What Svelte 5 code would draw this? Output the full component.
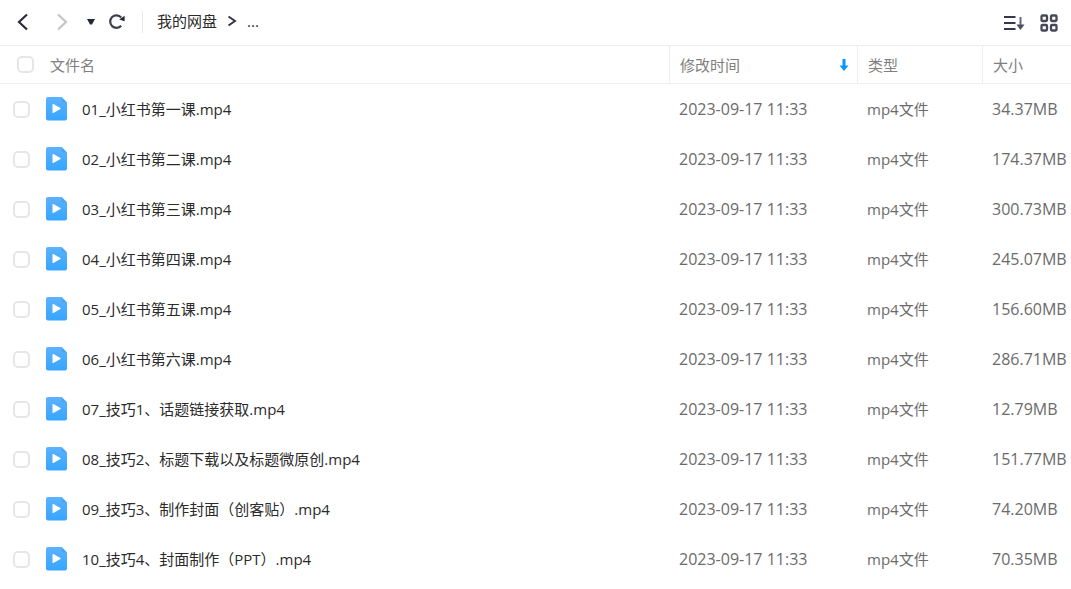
<script>
  const files = [
    ['01_小红书第一课.mp4', '34.37MB'],
    ['02_小红书第二课.mp4', '174.37MB'],
    ['03_小红书第三课.mp4', '300.73MB'],
    ['04_小红书第四课.mp4', '245.07MB'],
    ['05_小红书第五课.mp4', '156.60MB'],
    ['06_小红书第六课.mp4', '286.71MB'],
    ['07_技巧1、话题链接获取.mp4', '12.79MB'],
    ['08_技巧2、标题下载以及标题微原创.mp4', '151.77MB'],
    ['09_技巧3、制作封面（创客贴）.mp4', '74.20MB'],
    ['10_技巧4、封面制作（PPT）.mp4', '70.35MB']
  ].map(([name, size]) => ({ name, size, time: '2023-09-17 11:33', type: 'mp4文件' }));

  let selected = $state(files.map(() => false));
  let all = $derived(selected.every(Boolean));

  function toggleAll(event) {
    const value = event.currentTarget.checked;
    selected = files.map(() => value);
  }
</script>

<div class="drive">
  <header class="toolbar">
    <nav class="history">
      <button aria-label="后退">
        <svg width="16" height="20" viewBox="0 0 16 20"><path d="M13 2.500 5 10l8 7.500" fill="none" stroke="#2b2d3c" stroke-width="2.200" /></svg>
      </button>
      <button class="forward" aria-label="前进" disabled>
        <svg width="16" height="20" viewBox="0 0 16 20"><path d="M4 2.500 12 10l-8 7.500" fill="none" stroke="#c4c4c8" stroke-width="2.200" /></svg>
      </button>
      <button class="recent" aria-label="历史记录">
        <svg width="10" height="8" viewBox="0 0 10 8"><path d="M1 1h8L6 6.500H4z" fill="#25283a" /></svg>
      </button>
      <button class="refresh" aria-label="刷新">
        <svg width="18" height="18" viewBox="0 0 18 18">
          <path d="M13.200 12.800A6.300 6.300 0 1 1 13.200 4.400" fill="none" stroke="#3b3e4b" stroke-width="2.200" />
          <path d="M16.600 2.800v5.400l-5.400-1.600z" fill="#25283a" />
        </svg>
      </button>
    </nav>
    <nav class="crumbs" aria-label="路径">
      <a href="#root">我的网盘</a>
      <svg width="10" height="12" viewBox="0 0 10 12"><path d="m1.500 1.500 6.500 4.500-6.500 4.500" fill="none" stroke="#35363f" stroke-width="2" /></svg>
      <a href="#more">...</a>
    </nav>
    <div class="views">
      <button aria-label="排序">
        <svg width="22" height="18" viewBox="0 0 22 18">
          <path d="M1 3h11.500M1 9h11.500M1 15h11.500" stroke="#35384a" stroke-width="2" />
          <path d="M17.500 3v11" stroke="#666a78" stroke-width="2" />
          <path d="M13.500 10.500h8l-4 5.500z" fill="#4b4f60" />
        </svg>
      </button>
      <button aria-label="网格视图">
        <svg width="20" height="20" viewBox="0 0 20 20" fill="none" stroke="#454859" stroke-width="2.300">
          <rect x="2.500" y="2.500" width="5.500" height="5.500" rx="1" /><rect x="12" y="2.500" width="5.500" height="5.500" rx="1" />
          <rect x="2.500" y="12" width="5.500" height="5.500" rx="1" /><rect x="12" y="12" width="5.500" height="5.500" rx="1" />
        </svg>
      </button>
    </div>
  </header>

  <table>
    <colgroup><col /><col class="c-time" /><col class="c-type" /><col class="c-size" /></colgroup>
    <thead>
      <tr>
        <th>
          <div class="head-name">
            <input type="checkbox" aria-label="全选" checked={all} onchange={toggleAll} />
            <span>文件名</span>
          </div>
        </th>
        <th>
          <div class="head-time">
            <span>修改时间</span>
            <svg width="10" height="14" viewBox="0 0 10 14"><path d="M3.500 1h3v6.500H9.500L5 13 .5 7.500h3z" fill="#0a95ff" /></svg>
          </div>
        </th>
        <th>类型</th>
        <th>大小</th>
      </tr>
    </thead>
    <tbody>
      {#each files as file, i}
        <tr>
          <td>
            <label class="file">
              <input type="checkbox" bind:checked={selected[i]} />
              <svg width="22" height="26" viewBox="-1 0 22 26">
                <defs>
                  <linearGradient id="sheet{i}" x1="0" y1="0" x2="0" y2="1">
                    <stop offset="0" stop-color="#5cb2ff" /><stop offset="1" stop-color="#36a5ff" />
                  </linearGradient>
                </defs>
                <path d="M2 1h13.500l5.500 5.500v16a2 2 0 0 1-2 2H2a2 2 0 0 1-2-2V3a2 2 0 0 1 2-2z" fill="url(#sheet{i})" />
                <path d="M15.500 1l5.500 5.500h-3.500a2 2 0 0 1-2-2z" fill="#4da4f2" />
                <path d="M6.500 8.600v7.800q0 .9.900.500l7-3.900q.700-.500 0-1l-7-3.900q-.900-.400-.900.500z" fill="#fff" />
              </svg>
              <span>{file.name}</span>
            </label>
          </td>
          <td class="number">{file.time}</td>
          <td>{file.type}</td>
          <td class="number">{file.size}</td>
        </tr>
      {/each}
    </tbody>
  </table>
</div>

<style>
  :global(body) {
    background: #fff;
  }
  .drive {
    overflow: hidden;
    color: #6b6b6b;
    font: 15px/20px "Open Sans", "Noto Sans CJK SC", sans-serif;
  }
  .toolbar {
    display: flex;
    align-items: center;
    box-sizing: border-box;
    height: 46px;
    padding: 0 12px 2px 14px;
    border-bottom: 1px solid #eee;
  }
  button {
    display: flex;
    padding: 0;
    border: 0;
    background: none;
  }
  .history {
    display: flex;
    align-items: center;
    height: 22px;
    padding-right: 16px;
    border-right: 1px solid #e8e8e8;
  }
  .forward {
    margin-left: 24px;
  }
  .recent {
    margin-left: 16px;
  }
  .refresh {
    margin-left: 12px;
  }
  .crumbs {
    display: flex;
    align-items: center;
    gap: 10px;
    padding: 0 0 2px 14px;
  }
  a {
    color: #2b2b2b;
    text-decoration: none;
  }
  .views {
    display: flex;
    align-items: center;
    gap: 14px;
    margin-left: auto;
    padding-top: 2px;
  }
  table {
    width: 100%;
    table-layout: fixed;
    border-collapse: separate;
    border-spacing: 0;
  }
  .c-time {
    width: 188px;
  }
  .c-type {
    width: 125px;
  }
  .c-size {
    width: 89px;
  }
  th,
  td {
    box-sizing: border-box;
    padding: 0 0 0 10px;
    text-align: left;
    font-weight: 400;
    white-space: nowrap;
  }
  th {
    height: 38px;
    border-bottom: 1px solid #f1f1f1;
    color: #808080;
  }
  th + th {
    border-left: 1px solid #eee;
  }
  td {
    height: 50px;
  }
  th:first-child {
    padding-left: 17px;
  }
  td:first-child {
    padding-left: 13px;
  }
  .head-name,
  .head-time,
  .file {
    display: flex;
    align-items: center;
  }
  .head-name {
    gap: 16px;
  }
  .head-time {
    justify-content: space-between;
    padding-right: 8px;
  }
  .file {
    gap: 15px;
    color: #2b2b2b;
  }
  .number {
    font-size: 16px;
  }
  input {
    appearance: none;
    box-sizing: border-box;
    width: 17px;
    height: 17px;
    margin: 0;
    border: 2px solid #e6e6e6;
    border-radius: 5px;
    background: #fff;
  }
  input:checked {
    border-color: #0a95ff;
    background: #0a95ff;
  }
</style>
